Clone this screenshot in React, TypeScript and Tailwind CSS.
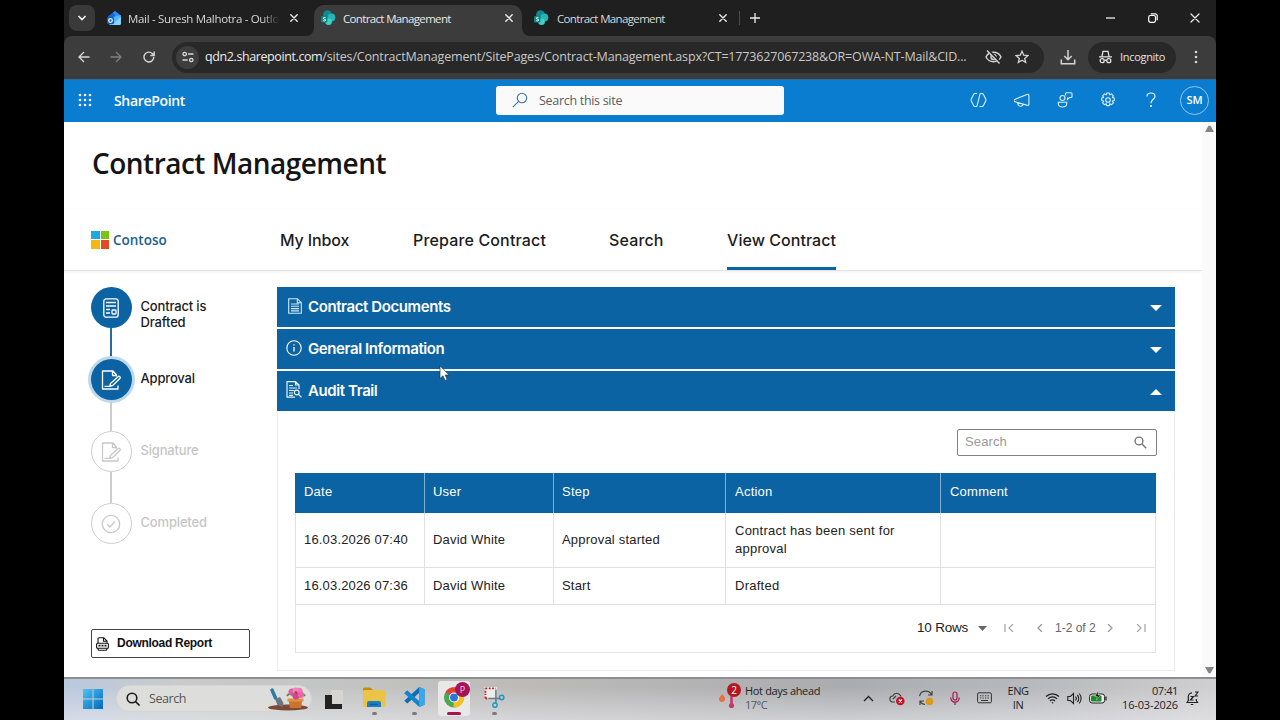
import type { ReactNode } from "react";

const segoe = "font-['Open_Sans',sans-serif]";

function SharePointLogo() {
  return (
    <svg width="16" height="16" viewBox="0 0 16 16">
      <circle cx="7.5" cy="4.600" r="4.400" fill="#0f8a90" />
      <circle cx="11.400" cy="7.500" r="3.900" fill="#25b5b5" />
      <circle cx="8.600" cy="11.800" r="3.300" fill="#3fd0ca" />
      <rect x="1" y="6" width="6.400" height="6.400" rx="1.200" fill="#0b8583" />
      <path d="M5.600 7.800c-.8-.6-2.300-.5-2.300.4 0 1.200 2.400.7 2.400 1.900 0 1-1.600 1.100-2.500.4" fill="none" stroke="#fff" strokeWidth="1" />
    </svg>
  );
}

function OutlookLogo() {
  return (
    <svg width="16" height="16" viewBox="0 0 16 16">
      <path d="M2 6.200 9 1l5.600 4.400v5L8 12 2 9Z" fill="#1565d8" />
      <path d="M7 2.600 9 1l5.600 4.600-4 2.400Z" fill="#2f8df5" />
      <path d="m3 8 11.800-3v8.400a1.600 1.600 0 0 1-1.600 1.600H4.600A1.600 1.600 0 0 1 3 13.400Z" fill="#52b8ff" />
      <path d="M6 15 14.800 7v6.400A1.600 1.600 0 0 1 13.200 15Z" fill="#8ad7ff" />
      <rect x="1" y="7" width="7" height="7" rx="1.300" fill="#0d57c4" />
      <circle cx="4.500" cy="10.500" r="1.800" fill="none" stroke="#fff" strokeWidth="1.200" />
    </svg>
  );
}

function CloseX({ size = 9, w = 1.4 }: { size?: number; w?: number }) {
  return (
    <svg width={size} height={size} viewBox="0 0 10 10" stroke="#eee" strokeWidth={w} strokeLinecap="round">
      <path d="m1 1 8 8M9 1 1 9" />
    </svg>
  );
}

function TabStrip() {
  return (
    <div className="flex h-9 shrink-0 bg-[#1f1f1f] text-[12px] text-[#d8d8d8]">
      <div className="mt-[5px] ml-[5px] grid h-[26px] w-[26px] place-items-center rounded-lg bg-[#3a3a3a]">
        <svg width="10" height="8" viewBox="0 0 10 8" fill="none" stroke="#eee" strokeWidth="1.7">
          <path d="m1.500 2 3.500 3.500L8.500 2" />
        </svg>
      </div>
      <div className="ml-[11px] flex h-9 w-[208px] items-center">
        <OutlookLogo />
        <span className="ml-[6px] w-[152px] pt-[2px] tracking-[-0.32px] whitespace-nowrap text-[11.5px] [mask-image:linear-gradient(to_right,black_88%,transparent)]">
          Mail - Suresh Malhotra - Outloo
        </span>
        <span className="ml-[10px]"><CloseX size={8} w={1.700} /></span>
      </div>
      <div className="relative mt-[5px] flex h-[31px] w-[208px] items-center rounded-t-[10px] bg-[#3c3c3c] pb-[5px] pl-[6px]">
        <svg className="absolute bottom-0 -left-2" width="8" height="8"><path d="M8 0v8H0a8 8 0 0 0 8-8Z" fill="#3c3c3c" /></svg>
        <svg className="absolute -right-2 bottom-0" width="8" height="8"><path d="M0 0v8h8a8 8 0 0 1-8-8Z" fill="#3c3c3c" /></svg>
        <SharePointLogo />
        <span className="ml-[7px] w-[158px] pt-[2px] tracking-[-0.65px] text-[11.500px] text-[#e8e8e8]">Contract Management</span>
        <span className="ml-[4px]"><CloseX size={8} w={1.700} /></span>
      </div>
      <div className="ml-[11px] flex h-9 items-center">
        <SharePointLogo />
        <span className="ml-[8px] w-[158px] pt-[2px] tracking-[-0.65px] text-[11.500px]">Contract Management</span>
        <span className="ml-[4px]"><CloseX size={8} w={1.700} /></span>
        <span className="ml-[12px] h-[14px] w-px bg-[#4c4c4c]" />
        <svg className="ml-[10px]" width="10" height="10" stroke="#eee" strokeWidth="1.300"><path d="M5 0v10M0 5h10" /></svg>
      </div>
      <div className="ml-auto flex h-9 items-center gap-[32px] pr-[16px]">
        <svg className="mr-px" width="9" height="10" stroke="#fff" strokeWidth="1.200"><path d="M0 5h9" /></svg>
        <svg width="10" height="10" viewBox="0 0 10 10" fill="none" stroke="#fff" strokeWidth="1.200">
          <rect x="0.700" y="2.500" width="6.800" height="6.800" rx="1.700" />
          <path d="M2.700 0.800h4.500a2 2 0 0 1 2 2v4.500" />
        </svg>
        <CloseX size={10} w={1.200} />
      </div>
    </div>
  );
}

function Toolbar() {
  return (
    <div className="flex h-[43px] shrink-0 items-center rounded-t-[8px] bg-[#3c3c3c] pb-px text-[13px] text-[#c9c9c9]">
      <svg className="ml-[14px]" width="12" height="12" viewBox="0 0 12 12" fill="none" stroke="#d5d5d5" strokeWidth="1.300"><path d="M11.500 6H1.200M6 1 1 6l5 5" /></svg>
      <svg className="ml-[20px]" width="12" height="12" viewBox="0 0 12 12" fill="none" stroke="#7d7d7d" strokeWidth="1.300"><path d="M0.500 6h10.300M6 1l5 5-5 5" /></svg>
      <svg className="ml-[21px]" width="12" height="12" viewBox="0 0 12 12" fill="none" stroke="#d5d5d5" strokeWidth="1.400"><path d="M10.800 6a4.900 4.900 0 1 1-1.500-3.500L11 4.200M11.200.5v4H7.300" /></svg>
      <div className="ml-[17px] flex h-[31px] w-[872px] items-center rounded-full bg-[#282828] pl-[4px]">
        <div className="grid h-[23px] w-[23px] place-items-center rounded-full bg-[#3e3e3e]">
          <svg width="12" height="12" viewBox="0 0 12 12" fill="none" stroke="#d8d8d8" strokeWidth="1.300">
            <circle cx="2.700" cy="3" r="1.700" /><path d="M6 3h5.500M0.500 9h5.200" /><circle cx="9.300" cy="9" r="1.700" />
          </svg>
        </div>
        <span className="ml-[6px] w-[764px] pt-px text-[12.500px] whitespace-nowrap">
          <span className="tracking-[-0.4px] text-[#ececec]">qdn2.sharepoint.com</span>
          <span className="tracking-[-0.17px]">/sites/ContractManagement/SitePages/Contract-Management.aspx?CT=1773627067238&amp;OR=OWA-NT-Mail&amp;CID...</span>
        </span>
        <svg className="ml-[16px]" width="17" height="16" viewBox="0 0 17 16" fill="none" stroke="#d5d5d5" strokeWidth="1.400">
          <path d="M1 8c1.500-3 4.200-4.700 7.500-4.700S14.500 5 16 8c-1.500 3-4.200 4.700-7.500 4.700S2.500 11 1 8Z" /><circle cx="8.500" cy="8" r="2.500" />
          <path d="M3 1 15.500 14.500" stroke="#282828" strokeWidth="3" /><path d="m2 1.500 12.500 13" />
        </svg>
        <svg className="ml-[13px]" width="14" height="14" viewBox="0 0 14 14" fill="none" stroke="#d5d5d5" strokeWidth="1.300"><path d="m7 1.300 1.700 3.900 4.200.4-3.200 2.800 1 4.100L7 10.300l-3.700 2.200 1-4.100-3.200-2.800 4.200-.4Z" /></svg>
      </div>
      <svg className="ml-[16px]" width="16" height="15" viewBox="0 0 16 15" fill="none" stroke="#d5d5d5" strokeWidth="1.500"><path d="M8 0v9.500M4.300 6 8 9.700 11.700 6M1.300 9.500v4.200h13.400V9.500" /></svg>
      <div className="ml-[12px] flex h-[31px] w-[88px] items-center rounded-full bg-[#282828] pl-[11px]">
        <svg width="13" height="14" viewBox="0 0 13 14" fill="none" stroke="#e4e4e4" strokeWidth="1.300">
          <path d="M3 6.300 4 1.300h5l1 5M0 6.800h13" /><circle cx="3.200" cy="10.700" r="2" /><circle cx="9.800" cy="10.700" r="2" /><path d="M5.200 10.200h2.600" />
        </svg>
        <span className="ml-[8px] pt-px text-[11px] tracking-[-0.3px] text-[#e4e4e4]">Incognito</span>
      </div>
      <svg className="ml-[18px]" width="4" height="14" fill="#d5d5d5"><circle cx="2" cy="2" r="1.300" /><circle cx="2" cy="7" r="1.300" /><circle cx="2" cy="12" r="1.300" /></svg>
    </div>
  );
}

function SuiteBar() {
  return (
    <div className="flex h-[43px] shrink-0 items-center border-t border-[#2a6ea8] bg-[#0b7dd0] pb-[2px] text-white">
      <svg className="ml-[14px]" width="14" height="14" fill="#fff">
        {[2, 7, 12].map((y) => [2, 7, 12].map((x) => <circle key={`${x}-${y}`} cx={x} cy={y} r="1.300" />))}
      </svg>
      <span className="ml-[22px] w-[382px] text-[14px] font-semibold tracking-[-0.33px]">SharePoint</span>
      <div className="flex h-[29px] w-[288px] items-center rounded-[3px] bg-[#fafafa] pl-[16px]">
        <svg width="16" height="16" viewBox="0 0 16 16" fill="none" stroke="#3a72a8" strokeWidth="1.100"><circle cx="10" cy="6" r="4.700" /><path d="M6.600 9.400.8 15.200" /></svg>
        <span className="ml-[11px] pt-[2px] text-[12.500px] tracking-[-0.3px] text-[#5c5c5c]">Search this site</span>
      </div>
      <svg className="ml-[186px]" width="17" height="16" viewBox="0 0 17 16" fill="none" stroke="#d9f1ff" strokeWidth="1.100"><path d="M7 1.500H5A1.500 1.500 0 0 0 3.700 2.300L1.200 7.200a1.500 1.500 0 0 0 0 1.500l2.500 5A1.500 1.500 0 0 0 5 14.500h1a1 1 0 0 0 1-.7L10 2.200a1 1 0 0 1 1-.7h1a1.500 1.500 0 0 1 1.300.8l2.500 4.900a1.500 1.500 0 0 1 0 1.500l-2.500 5a1.500 1.500 0 0 1-1.300.8h-2.500" /></svg>
      <svg className="ml-[27px]" width="16" height="15" viewBox="0 0 16 15" fill="none" stroke="#d9f1ff" strokeWidth="1.100" strokeLinejoin="round"><path d="M1.300 6.200 13.500 1.300a1 1 0 0 1 1.400.9v9.300a1 1 0 0 1-1.400.9L1.300 8.800a1.300 1.300 0 0 1 0-2.600ZM3.700 9.700c0 2.700 1.800 3.800 3.300 3.500 1.300-.3 2-1 2.200-1.800" /></svg>
      <svg className="ml-[27px]" width="16" height="16" viewBox="0 0 16 16" fill="none" stroke="#d9f1ff" strokeWidth="1.100"><circle cx="5.500" cy="6" r="2.500" /><path d="M1.300 10.300h8.400v1.500c0 2-1.700 3.200-4.200 3.200s-4.200-1.200-4.200-3.200ZM8.500 3.500V1.800a1 1 0 0 1 1-1H14a1 1 0 0 1 1 1v2.700a1 1 0 0 1-1 1h-1.500l-2 2v-2" /></svg>
      <svg className="ml-[27px]" width="16" height="16" viewBox="0 0 16 16" fill="none" stroke="#d9f1ff" strokeWidth="1.100" strokeLinejoin="round">
        <circle cx="8" cy="8" r="2.300" />
        <path d="M6.700 1h2.600l.5 1.900 1.700-1 1.900 1.900-1 1.600 1.900.6v2.500l-1.900.6 1 1.700-1.900 1.900-1.700-1-.5 1.900H6.700l-.5-1.900-1.700 1-1.900-1.900 1-1.700-1.900-.6V6l1.900-.6-1-1.600 1.900-1.900 1.700 1Z" />
      </svg>
      <svg className="ml-[30px]" width="10" height="16" viewBox="0 0 10 16" fill="none" stroke="#e4f5ff" strokeWidth="1.200"><path d="M1 4.500C1 2.300 2.700 1 5 1s4 1.400 4 3.400C9 7.200 5 7.500 5 11.300" /><circle cx="5" cy="14" r=".5" fill="#fff" /></svg>
      <div className="ml-[24px] grid h-[29px] w-[29px] place-items-center rounded-full border border-[#8cc8f2] text-[11px] font-semibold tracking-[-0.2px]">SM</div>
    </div>
  );
}

function DocPencil({ color }: { color: string }) {
  return (
    <svg width="20" height="20" viewBox="0 0 20 20" fill="none" stroke={color} strokeWidth="1.300" strokeLinejoin="round">
      <path d="M17 15.500v3.500H1.500V1H12l3.500 4v1.500M11.500 1v4.500h4" />
      <path d="m9.500 13.500 7.500-6.800a1.300 1.300 0 0 1 1.900 1.800l-7.200 7-3 .8ZM3.500 16.300h5" />
    </svg>
  );
}

function Step({ label, state, icon, last }: { label: string; state: "done" | "active" | "todo"; icon: ReactNode; last?: boolean }) {
  const circle =
    state === "todo" ? "border-[1.500px] border-[#cdcdcd]" : state === "active" ? "bg-[#0c63a3] shadow-[0_0_0_3px_#bfd8ea]" : "bg-[#0c63a3]";
  return (
    <div className="flex h-[72px]">
      <div className="flex w-[41px] flex-col items-center">
        <div className={`grid h-[41px] w-[41px] shrink-0 place-items-center rounded-full pr-px ${circle}`}>{icon}</div>
        {!last && <div className={`mr-px w-[2px] flex-1 ${state === "done" ? "bg-[#2a6b9c]" : "bg-[#cdcdcd]"}`} />}
      </div>
      <div className={`ml-[8.500px] w-[90px] pt-[11px] font-[Inter,sans-serif] text-[13px] leading-4 font-medium tracking-[-0.17px] ${state === "todo" ? "text-[#c6c6c6]" : "text-[#1c1c1c]"}`}>
        {label}
      </div>
    </div>
  );
}

function AccordionBar({ title, icon, open }: { title: string; icon: ReactNode; open?: boolean }) {
  return (
    <div className="flex h-[39.500px] items-center bg-[#0c63a3] pr-[13px] pl-[8px] text-white">
      <div className="mb-[2px] grid w-[18px] place-items-center">{icon}</div>
      <span className="ml-[5px] font-[Inter,sans-serif] text-[15px] font-semibold tracking-[-0.4px]">{title}</span>
      <svg className="mt-[2px] ml-auto" width="12" height="6" fill="#fff">{open ? <path d="M0 6 6 0l6 6Z" /> : <path d="m0 0 6 6 6-6Z" />}</svg>
    </div>
  );
}

const rows = [
  { h: "h-[55px]", cells: ["16.03.2026 07:40", "David White", "Approval started", "Contract has been sent for approval", ""] },
  { h: "h-[37px]", cells: ["16.03.2026 07:36", "David White", "Start", "Drafted", ""] },
];

function AuditTable() {
  const cols = "grid grid-cols-[129px_129px_172px_215px_215px]";
  return (
    <div className="mt-[17px] w-[861px] font-['Liberation_Sans',Arial,sans-serif] text-[13px] text-[#222]">
      <div className={`${cols} h-[40px] border-l border-[#0c63a3] bg-[#0c63a3] text-white`}>
        {["Date", "User", "Step", "Action", "Comment"].map((h, i) => (
          <div key={h} className={`flex items-center pb-px tracking-[0.230px] ${i < 3 ? "pl-[8px]" : "pl-[9px]"} ${i < 4 ? "border-r border-[#7fb0d6]" : ""}`}>{h}</div>
        ))}
      </div>
      {rows.map((r) => (
        <div key={r.cells[0]} className={`${cols} ${r.h} border-b border-l border-[#e0e0e0]`}>
          {r.cells.map((c, i) => (
            <div key={i} className={`flex items-center border-r border-[#e0e0e0] leading-[18px] ${i === 0 ? "pl-[8px] tracking-[0.170px]" : i < 3 ? "pl-[8px] tracking-[0.200px]" : "pl-[9px] tracking-[0.250px]"}`}>{c}</div>
          ))}
        </div>
      ))}
      <div className="flex h-[48px] items-center border-x border-b border-[#e4e4e4] pl-[621px]">
        <span className="w-[61px] text-[13.500px] tracking-[-0.200px]">10 Rows</span>
        <svg width="9" height="5" fill="#666"><path d="m0 0 4.500 5L9 0Z" /></svg>
        <svg className="ml-[17px]" width="10" height="8" fill="none" stroke="#aaa" strokeWidth="1.300"><path d="M1 0v8M9 0 5 4l4 4" /></svg>
        <svg className="ml-[23px]" width="6" height="8" fill="none" stroke="#999" strokeWidth="1.300"><path d="M5 0 1 4l4 4" /></svg>
        <span className="ml-[12px] w-[52px] text-[12px] text-[#666]">1-2 of 2</span>
        <svg width="6" height="8" fill="none" stroke="#999" strokeWidth="1.300"><path d="m1 0 4 4-4 4" /></svg>
        <svg className="ml-[23px]" width="10" height="8" fill="none" stroke="#aaa" strokeWidth="1.300"><path d="m1 0 4 4-4 4M9 0v8" /></svg>
      </div>
    </div>
  );
}

function Page() {
  return (
    <div className="flex h-[555px] shrink-0 bg-white">
      <div className="flex w-[1138px] flex-col">
        <h1 className="mt-[22px] ml-[28px] font-['Open_Sans',sans-serif] text-[28px] leading-[38px] font-semibold tracking-[-0.510px] text-[#151515]">Contract Management</h1>
        <nav className="mt-[27px] flex h-[62px] border-b border-[#e4e4e4] pl-[27px] font-[Inter,sans-serif] text-[16px] font-medium text-[#1c1c1c] shadow-[0_1px_3px_rgba(0,0,0,0.06)]">
          <div className="flex h-[61px] w-[189px] items-center">
            <div className="grid grid-cols-2 gap-px">
              <i className="h-[8.500px] w-[8.500px] bg-[#1ba7e2]" /><i className="h-[8.500px] w-[8.500px] bg-[#7cc413]" />
              <i className="h-[8.500px] w-[8.500px] bg-[#f5b90d]" /><i className="h-[8.500px] w-[8.500px] bg-[#e04a25]" />
            </div>
            <span className={`${segoe} ml-[4px] pt-px text-[13.500px] font-semibold tracking-[0px] text-[#1c5f92]`}>Contoso</span>
          </div>
          <div className="flex h-[61px] w-[133px] items-center tracking-[-0.120px]">My Inbox</div>
          <div className="flex h-[61px] w-[196px] items-center tracking-[0.150px]">Prepare Contract</div>
          <div className="flex h-[61px] w-[118px] items-center tracking-[0.150px]">Search</div>
          <div className="flex h-[61px] w-[109px] items-center border-b-[3px] border-[#0c63a3] pt-[3px] tracking-[0.050px] whitespace-nowrap">View Contract</div>
        </nav>
        <div className="flex pt-[16px] pl-[27px]">
          <aside className="flex h-[371px] w-[186px] flex-col">
            <Step label="Contract is Drafted" state="done" icon={
              <svg width="16" height="20" viewBox="0 0 16 20" fill="none" stroke="#fff" strokeWidth="1.300">
                <rect x=".8" y=".8" width="14.400" height="18.400" rx="2.500" /><path d="M3 4.500h10M3 8h10M3 11.500h4M3 15h4" /><rect x="9" y="12" width="4" height="4" rx=".8" />
              </svg>} />
            <Step label="Approval" state="active" icon={<DocPencil color="#fff" />} />
            <Step label="Signature" state="todo" icon={<DocPencil color="#c8c8c8" />} />
            <Step label="Completed" state="todo" last icon={
              <svg width="20" height="20" viewBox="0 0 20 20" fill="none" stroke="#c8c8c8" strokeWidth="1.300"><circle cx="10" cy="10" r="8.700" /><path d="m6 10.300 2.800 2.700L14 7.500" /></svg>} />
            <div className="mt-auto flex h-[29px] w-[159px] items-center rounded-[2px] border border-[#444] pl-[4px]">
              <svg width="13" height="14" viewBox="0 0 13 14" fill="none" stroke="#111" strokeWidth="1.100">
                <path d="M2 6V2a1.300 1.300 0 0 1 1.300-1.300h4.500L11 4v2M7.500.8v3.500H11M2 11v1a1.300 1.300 0 0 0 1.300 1.300h6.400A1.300 1.300 0 0 0 11 12v-1" />
                <rect x=".6" y="6.200" width="11.800" height="5" rx="1" /><path d="M2.500 8.700h2M5.500 8.700h2M8.500 8.700h2" strokeWidth="1.800" />
              </svg>
              <span className="ml-[8px] pb-[2px] font-['Liberation_Sans',Arial,sans-serif] text-[12px] font-bold tracking-[-0.290px] text-[#111]">Download Report</span>
            </div>
          </aside>
          <main className="w-[898px]">
            <div className="flex flex-col gap-[2.500px]">
              <AccordionBar title="Contract Documents" icon={
                <svg className="ml-px" width="14" height="16" viewBox="0 0 14 16" fill="none" stroke="#cfeaf8" strokeWidth="1.100"><path d="M.7.7h8.600l4 4v10.600H.7ZM9.300.7v4h4M3 6h8M3 8.300h8M3 10.600h8M3 12.900h8" /></svg>} />
              <AccordionBar title="General Information" icon={
                <svg width="16" height="16" viewBox="0 0 16 16" fill="none" stroke="#fff" strokeWidth="1.100"><circle cx="8" cy="8" r="7.200" /><path d="M8 7v4.500M8 4.300v1.200" strokeWidth="1.300" /></svg>} />
              <AccordionBar title="Audit Trail" open icon={
                <svg width="16" height="17" viewBox="0 0 16 17" fill="none" stroke="#e6f4fb" strokeWidth="1.200"><path d="M13 8V4L9.500.7H1v15.500h8M9.500.7V4H13M3 4.500h4M3 7h8M3 9.500h5M3 12h4M3 14.300h4" /><circle cx="10.700" cy="11.500" r="2.400" /><path d="m12.500 13.300 3 3" /></svg>} />
            </div>
            <div className="h-[260px] border border-t-0 border-[#ebebeb] pt-[18px] pl-[17px]">
              <div className="ml-[662px] flex h-[27px] w-[200px] items-center justify-between rounded-[2px] border border-[#828282] pr-[9px] pl-[7px] font-['Liberation_Sans',Arial,sans-serif] text-[13px] tracking-[0.130px] text-[#999]">
                Search
                <svg width="13" height="13" viewBox="0 0 13 13" fill="none" stroke="#757575" strokeWidth="1.400"><circle cx="5" cy="5" r="3.900" /><path d="m8 8 4.200 4.200" /></svg>
              </div>
              <AuditTable />
            </div>
          </main>
        </div>
      </div>
      <div className="flex flex-1 flex-col items-center justify-between bg-[#fafafa] py-[3px]">
        <svg width="9" height="7" fill="#858585"><path d="M0 7 3.500.8h2L9 7Z" /></svg>
        <svg width="9" height="7" fill="#858585"><path d="m0 0 3.500 6.200h2L9 0Z" /></svg>
      </div>
    </div>
  );
}

function TaskApp({ children, active, run = true }: { children: ReactNode; active?: boolean; run?: boolean }) {
  return (
    <div className={`flex h-[35px] w-[32px] flex-col items-center justify-between rounded-[3px] pt-[5px] pb-px ${active ? "bg-[#e9e7e7]" : ""}`}>
      {children}
      <i className={`rounded-full ${!run ? "h-0" : active ? "h-[3px] w-[14px] bg-[#a8124e]" : "h-[3px] w-[5px] bg-[#7a7a7a]"}`} />
    </div>
  );
}

function Taskbar() {
  return (
    <div className="flex h-[43px] shrink-0 items-center border-t-2 border-[#8e8e90] bg-[linear-gradient(to_bottom,rgba(255,255,255,0)_20%,rgba(235,235,240,0.55)_100%),linear-gradient(to_right,#b9c9de_0%,#c9cbcb_10%,#bcbbba_40%,#abacaf_68%,#b9babd_85%,#d0cfd1_100%)] pb-[2px] text-[11px] text-[#222]">
      <svg className="ml-[18px] shrink-0" width="22" height="22" viewBox="0 0 22 22">
        <defs><linearGradient id="win" x1="0" y1="0" x2="1" y2="1"><stop offset="0" stopColor="#4fc3ee" /><stop offset="1" stopColor="#0068bd" /></linearGradient></defs>
        <path d="M1 1h9.500v9.500H1ZM11.500 1H21v9.500h-9.500ZM1 11.500h9.500V21H1ZM11.500 11.500H21V21h-9.500Z" fill="url(#win)" />
      </svg>
      <div className="ml-[12px] flex h-[27px] w-[196px] shrink-0 items-center rounded-full border border-[#d5d5d2] bg-[#dddedb] pl-[9px]">
        <svg width="14" height="14" viewBox="0 0 14 14" fill="none" stroke="#1c1c1c" strokeWidth="1.600"><circle cx="6" cy="6" r="4.800" /><path d="m9.500 9.500 4 4" /></svg>
        <span className="ml-[9px] w-[118px] pt-[2px] text-[12.500px] tracking-[-0.450px] text-[#555]">Search</span>
        <svg width="42" height="24" viewBox="0 0 42 24">
          <ellipse cx="21" cy="20.500" rx="20" ry="3" fill="#7b4a34" />
          <path d="m5 3 3.500 8" stroke="#2b7ba3" strokeWidth="3.500" strokeLinecap="round" />
          <path d="m8 12 5-2 3.500 6-1 4-5-2Z" fill="#687780" />
          <path d="M21.500 12h14l-1.500 9H23Z" fill="#c9752f" /><path d="M20.500 11.500h16v3h-16Z" fill="#de9245" />
          <path d="M20 9c2-3 5-2 6 0M38 9c-2-3-4-2-6 0" stroke="#5c8f3d" strokeWidth="2" fill="none" />
          <circle cx="25" cy="5" r="3.500" fill="#e05a9d" /><circle cx="32" cy="4.500" r="3.800" fill="#ee78b1" /><circle cx="29" cy="9" r="3.500" fill="#d4458d" /><circle cx="34" cy="8" r="3" fill="#e566a3" /><circle cx="28.500" cy="3.500" r="3" fill="#ef85b8" /><circle cx="29" cy="5.500" r="1.500" fill="#c22f6e" />
        </svg>
      </div>
      <div className="ml-[6px] flex items-center gap-[8px]">
        <TaskApp run={false}><svg className="mt-[4px]" width="18" height="20" viewBox="0 0 18 20"><path d="M6 0h12v14H6Z" fill="#d6d5d2" /><path d="M0 5h7v9h10v5H0Z" fill="#242321" /></svg></TaskApp>
        <TaskApp>
          <svg className="ml-px" width="23" height="22" viewBox="0 0 23 22"><path d="M0 3a1.500 1.500 0 0 1 1.500-1.500h6L10 4v4H0Z" fill="#c68a14" /><rect y="4" width="22.500" height="17" rx="1.500" fill="#ebc446" /><path d="M4 21v-4a2 2 0 0 1 2-2h10a2 2 0 0 1 2 2v4Z" fill="#1b7dc4" /><path d="M7 18.500h8" stroke="#0e5f9e" strokeWidth="1.300" /></svg>
        </TaskApp>
        <TaskApp>
          <svg width="23" height="22" viewBox="0 0 23 23"><path d="M16.500 1 22 3.500v16L16.500 22V16L5 7.300 3 9 .8 7.800 4 4.800l12.500 11.500Z" fill="#137bc0" /><path d="M16.500 1v6L4 18.200.8 15.500Z" fill="#0a6fb5" /><path d="M3.800 4.800.8 7.500l15.700 14.500V16Z" fill="#1583c9" /><path d="m16.500 1 5.500 2.500v16L16.500 22Z" fill="#39a7ea" /></svg>
        </TaskApp>
        <TaskApp active>
          <div className="relative">
            <svg width="22" height="22" viewBox="0 0 22 23"><circle cx="11" cy="12" r="10.500" fill="#4aa852" /><path d="M11 12 2 6.500A10.500 10.500 0 0 1 20.300 7Z" fill="#df4335" /><path d="M11 12 20.300 7A10.500 10.500 0 0 1 10.500 22.500Z" fill="#f4c022" /><circle cx="11" cy="12" r="5.200" fill="#fff" /><circle cx="11" cy="12" r="4.100" fill="#2d73e0" /></svg>
            <span className="absolute -top-[4px] -right-[5px] grid h-[15px] w-[15px] place-items-center rounded-full bg-[#a5135a] text-[9px] text-[#f6cfe2]">P</span>
          </div>
        </TaskApp>
        <TaskApp>
          <svg width="22" height="22" viewBox="0 0 22 23" fill="none"><path d="M1 1h13v13H1Z" fill="#ececec" /><path d="M2 2.500h11M2 7V2.500M2 13h2M2 13V8" stroke="#b92c22" strokeWidth="2" strokeDasharray="2 1.500" /><path d="M13 4v14M5 13h13" stroke="#6b7780" strokeWidth="1.600" /><circle cx="12" cy="20" r="2.300" stroke="#159bcc" strokeWidth="1.500" /><circle cx="19" cy="12" r="2.300" stroke="#159bcc" strokeWidth="1.500" /></svg>
        </TaskApp>
      </div>
      <div className="ml-auto flex items-center pb-px">
        <div className="relative h-[30px] w-[22px]">
          <svg className="absolute top-[9px] left-0" width="16" height="20" viewBox="0 0 16 20"><path d="M3 2c1 1.500 3 2.500 3 4.800A3 3 0 0 1 0 7C0 5 2 4.500 3 2Z" fill="#e8703c" /><path d="M12.500 5v8" stroke="#c23a6b" strokeWidth="2.600" strokeLinecap="round" /><circle cx="12.500" cy="13.500" r="2.600" fill="#c23a6b" /></svg>
          <span className="absolute top-0 right-0 grid h-[14px] w-[14px] place-items-center rounded-full bg-[#b5171e] text-[10px] text-white">2</span>
        </div>
        <div className="ml-[4px] w-[118px] leading-[14px]">
          <div className="tracking-[-0.340px]">Hot days ahead</div>
          <div className="tracking-[-0.500px] text-[#55585d]">17°C</div>
        </div>
        <svg width="11" height="7" fill="none" stroke="#222" strokeWidth="1.300"><path d="m1 6 4.500-4.500L10 6" /></svg>
        <svg className="ml-[15px]" width="16" height="15" viewBox="0 0 16 15" fill="none" stroke="#444" strokeWidth="1.200"><path d="M6 11H4a3 3 0 0 1-.3-6A4.500 4.500 0 0 1 12 5.500M4 8l3-3" /><circle cx="11.300" cy="10" r="4.300" fill="#c4122c" stroke="none" /><path d="m9.800 8.500 3 3M12.800 8.500l-3 3" stroke="#fff" /></svg>
        <svg className="ml-[13px]" width="16" height="16" viewBox="0 0 16 16" fill="none" stroke="#444" strokeWidth="1.200"><path d="M1.500 6A6.500 6.500 0 0 1 13.500 4.500M14 1v4h-4M2 15v-4h4M2 11a6.500 6.500 0 0 0 5 3.500" /><circle cx="11.500" cy="11.500" r="3.800" fill="#dc9a1d" stroke="none" /></svg>
        <svg className="ml-[16px]" width="10" height="15" viewBox="0 0 10 15" fill="none" stroke="#a3164e" strokeWidth="1.200"><rect x="3" y="1" width="4" height="8" rx="2" /><path d="M.8 6.500v.5a4.200 4.200 0 0 0 8.400 0v-.5M5 11.200V14" /></svg>
        <svg className="ml-[17px]" width="15" height="12" viewBox="0 0 15 12" fill="none" stroke="#333" strokeWidth="1"><rect x=".6" y=".8" width="13.800" height="10" rx="1.300" /><path d="M3 3.800h9M3 6h9" strokeDasharray="1.300 1.200" /><path d="M4 8.500h7" /></svg>
        <div className="ml-[15px] w-[22px] text-center leading-[14px] tracking-[-0.450px]">ENG<br />IN</div>
        <svg className="ml-[16px]" width="15" height="12" viewBox="0 0 15 12" fill="none" stroke="#222" strokeWidth="1.200"><path d="M1 4.500a9.200 9.200 0 0 1 13 0M3 6.800a6.300 6.300 0 0 1 9 0M5 9a3.500 3.500 0 0 1 5 0" /><circle cx="7.500" cy="10.700" r=".8" fill="#222" stroke="none" /></svg>
        <svg className="ml-[7px]" width="15" height="13" viewBox="0 0 15 13" fill="none" stroke="#222" strokeWidth="1.100"><path d="M.8 4.500h2.500L6.500 1.500v10l-3.200-3H.8ZM8.500 4.500a3 3 0 0 1 0 4M10.300 3a5 5 0 0 1 0 7M12.200 1.500a7.500 7.500 0 0 1 0 10" /></svg>
        <svg className="mb-[3px] ml-[7px]" width="18" height="14" viewBox="0 0 18 14"><rect x=".6" y="4" width="15" height="9" rx="2.500" fill="#e8efe8" stroke="#222" /><rect x="2" y="5.500" width="10.500" height="6" rx="1" fill="#1e8a2c" /><path d="M17 6.500v4" stroke="#222" strokeWidth="1.200" /><path d="M9.500 0 6 6.500h2.500L7.500 10 11.500 5H9Z" fill="#111" stroke="#dfe9df" strokeWidth=".5" /></svg>
        <div className="ml-[14px] w-[57px] text-right leading-[14px]">
          <div className="tracking-[-0.400px]">07:41</div>
          <div className="tracking-[-0.140px] whitespace-nowrap">16-03-2026</div>
        </div>
        <svg className="mr-[17px] ml-[8px]" width="13" height="15" viewBox="0 0 13 15" fill="none" stroke="#222" strokeWidth="1.200"><path d="M6 1.800A4 4 0 0 0 2.300 6v3.500L1 11.500h10.500l-1.200-2V8M4.800 13.500h2.500M4.500 5.500h3L4.500 9h3M9 1h3L9.200 5H12" /></svg>
      </div>
    </div>
  );
}

export default function App() {
  return (
    <div className="h-[720px] w-[1280px] overflow-hidden bg-black px-16">
      <div className={`${segoe} relative flex h-full w-[1152px] flex-col bg-[#1f1f1f]`}>
        <TabStrip />
        <Toolbar />
        <SuiteBar />
        <Page />
        <Taskbar />
        <svg className="absolute top-[365px] left-[375px]" width="11" height="17" viewBox="0 0 11 17"><path d="M1 .8v12.700l3-2.700 2 4.700 2.200-1-2-4.500h4Z" fill="#fff" stroke="#26313b" strokeWidth=".7" /></svg>
      </div>
    </div>
  );
}
